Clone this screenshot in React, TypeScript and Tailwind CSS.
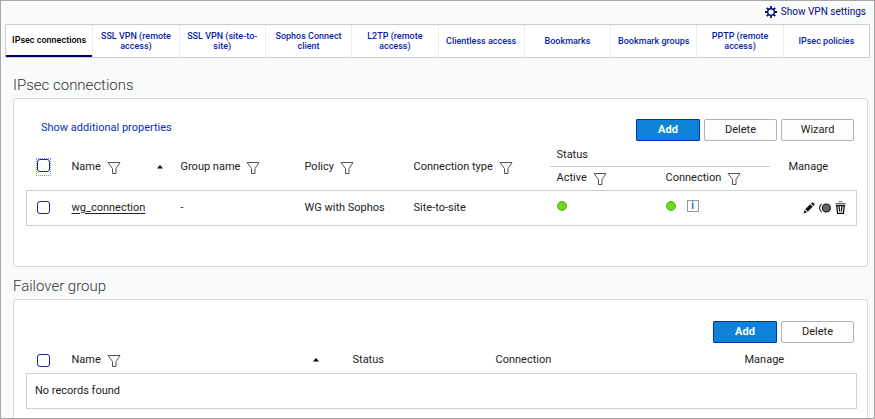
import type { ReactNode } from "react";

const tabs = [
  "IPsec connections",
  "SSL VPN (remote access)",
  "SSL VPN (site-to-site)",
  "Sophos Connect client",
  "L2TP (remote access)",
  "Clientless access",
  "Bookmarks",
  "Bookmark groups",
  "PPTP (remote access)",
  "IPsec policies",
];

function GearIcon() {
  return (
    <svg viewBox="0 0 12 12" className="size-3 shrink-0" stroke="#000d80" fill="none" aria-hidden="true">
      <circle cx="6" cy="6" r="3.3" strokeWidth="1.4" />
      <path
        strokeWidth="1.8"
        d="M6 0v2.4M6 9.6V12M0 6h2.4M9.6 6H12M1.8 1.8l1.6 1.6M8.6 8.6l1.6 1.6M1.8 10.2l1.6-1.6M8.6 3.4l1.6-1.6"
      />
    </svg>
  );
}

function FilterIcon() {
  return (
    <svg viewBox="0 0 14 14" className="size-3.5" fill="none" stroke="#555" aria-hidden="true">
      <path d="M1 1.5h12L9 7.5v5H5.5v-5z" />
    </svg>
  );
}

function FilterButton({ label }: { label: string }) {
  return (
    <button type="button" aria-label={label} className="mt-0.5 shrink-0">
      <FilterIcon />
    </button>
  );
}

function SortIcon() {
  return (
    <svg viewBox="0 0 6 4" className="h-1 w-1.5 shrink-0" fill="#000" aria-hidden="true">
      <path d="M3 0l3 3.5H0z" />
    </svg>
  );
}

function PencilIcon() {
  return (
    <svg viewBox="0 0 12 12" className="size-3" aria-hidden="true">
      <path d="M.5 11.5l1-3.4 2.4 2.4zM2.2 7.3l5-5 2.5 2.5-5 5zM8 1.6L9 .6q.5-.4 1 0L11.4 2q.4.5 0 1l-1 1z" fill="#111" />
    </svg>
  );
}

function ToggleIcon() {
  return (
    <svg viewBox="0 0 12 10" className="h-2.5 w-3" fill="none" aria-hidden="true">
      <path d="M2.6.8Q.6 2.6.6 5t2 4.2" stroke="#222" strokeWidth="1.1" />
      <circle cx="7.4" cy="5" r="4" fill="#666" stroke="#111" strokeWidth="1.1" />
    </svg>
  );
}

function TrashIcon() {
  return (
    <svg viewBox="0 0 11 13" className="h-[13px] w-[11px]" fill="none" stroke="#111" aria-hidden="true">
      <path d="M4 1.5v-1h3v1" stroke="#888" />
      <path d="M.5 2.5h10" stroke="#666" />
      <path d="M.8 4.5h9.400M1.800 5l.8 7.400h5.800L9.200 5" strokeWidth="1.300" />
      <path d="M4 5l.7 5.500M7 5l-.7 5.500" strokeWidth="1.200" />
    </svg>
  );
}

function Check({ label, focused = false }: { label: string; focused?: boolean }) {
  return (
    <div
      className={
        focused
          ? "ml-2.5 flex h-4 w-[13px] items-start outline-1 outline-dotted outline-[#69a0dd]"
          : "ml-2.5 flex w-[13px]"
      }
    >
      <input
        type="checkbox"
        aria-label={label}
        className="size-[13px] appearance-none rounded-[3px] border border-[#2020a8] bg-white checked:bg-[#0f84d6]"
      />
    </div>
  );
}

function Action({ children, primary = false }: { children: string; primary?: boolean }) {
  return (
    <button
      type="button"
      className={
        primary
          ? "h-[22px] w-16 rounded-[1px] border border-[#0a2fb8] bg-[#0f84d6] font-bold text-white"
          : "h-[22px] w-[73px] rounded-[2px] border border-[#b3b3b3] bg-[#fdfdfd]"
      }
    >
      {children}
    </button>
  );
}

function HeadCell({ children, filter = false, sort = false }: { children: string; filter?: boolean; sort?: boolean }) {
  return (
    <div className="flex items-center gap-1.5">
      {children}
      {filter && <FilterButton label={`Filter ${children}`} />}
      {sort && (
        <span className="mr-[18px] ml-auto">
          <SortIcon />
        </span>
      )}
    </div>
  );
}

function Title({ children }: { children: ReactNode }) {
  return <h2 className="ml-3 text-[15px] leading-5 font-light text-[#333]">{children}</h2>;
}

export default function App() {
  return (
    <div className="flex min-h-screen flex-col border border-[#a6a6a6] bg-[#f9fbfb] font-[Roboto,'Liberation_Sans',sans-serif] text-[11px] leading-4 text-[#222]">
      <a href="#settings" className="mt-[3px] mr-2 flex items-center gap-1 self-end text-[10px] text-[#000d80]">
        <GearIcon />
        Show VPN settings
      </a>

      <nav className="mx-1 mt-1 grid h-[34px] grid-cols-10 rounded-[1px] border border-[#ccc] bg-white text-[9px] leading-[10px] font-medium">
        {tabs.map((tab, i) => (
          <a
            key={tab}
            href={`#tab-${i}`}
            aria-current={i === 0 ? "page" : undefined}
            className={
              i === 0
                ? "flex items-center justify-center border-b-2 border-[#00007f] text-center whitespace-nowrap text-black"
                : "flex items-center justify-center border-l border-[#eee] px-1 text-center text-[#0a1fa8]"
            }
          >
            {tab}
          </a>
        ))}
      </nav>

      <main className="flex flex-1 flex-col">
        <section className="mt-[17px]">
          <Title>IPsec connections</Title>
          <div className="mt-[3px] mr-1.5 ml-3 rounded-[3px] border border-[#d5dada] bg-white pt-5 pr-[13px] pb-10 pl-3">
            <div className="flex items-center gap-1">
              <a href="#properties" className="mr-auto -mt-1 ml-[15px] text-[#0a2fb8]">
                Show additional properties
              </a>
              <Action primary>Add</Action>
              <Action>Delete</Action>
              <Action>Wizard</Action>
            </div>
            <table className="mt-1 w-full table-fixed border-collapse text-left">
              <colgroup>
                <col className="w-[45px]" />
                <col className="w-[109px]" />
                <col className="w-[124px]" />
                <col className="w-[109px]" />
                <col className="w-[136px]" />
                <col className="w-[109px]" />
                <col className="w-[111px]" />
                <col className="w-[87px]" />
              </colgroup>
              <thead className="[&_th]:p-0 [&_th]:font-normal">
                <tr className="h-[21px]">
                  <th rowSpan={2}><Check label="Select all connections" focused /></th>
                  <th rowSpan={2}><HeadCell filter sort>Name</HeadCell></th>
                  <th rowSpan={2}><HeadCell filter>Group name</HeadCell></th>
                  <th rowSpan={2}><HeadCell filter>Policy</HeadCell></th>
                  <th rowSpan={2}><HeadCell filter>Connection type</HeadCell></th>
                  <th colSpan={2} className="border-b border-[#c5cfd2]"><div className="ml-[7px]">Status</div></th>
                  <th rowSpan={2}><div className="ml-[19px]">Manage</div></th>
                </tr>
                <tr className="h-6">
                  <th><div className="ml-[7px]"><HeadCell filter>Active</HeadCell></div></th>
                  <th><div className="ml-[7px]"><HeadCell filter>Connection</HeadCell></div></th>
                </tr>
              </thead>
              <tbody>
                <tr className="h-[35px] border border-[#ccd2d4]">
                  <td><Check label="Select wg_connection" /></td>
                  <td><a href="#wg" className="underline underline-offset-2">wg_connection</a></td>
                  <td>-</td>
                  <td>WG with Sophos</td>
                  <td>Site-to-site</td>
                  <td className="pb-1">
                    <span role="img" aria-label="Active" className="ml-[7px] block size-2.5 rounded-full border border-[#3cb815] bg-[#76d61c]" />
                  </td>
                  <td className="pb-1">
                    <div className="ml-[7px] flex items-center gap-[11px]">
                      <span role="img" aria-label="Connected" className="size-2.5 rounded-full border border-[#3cb815] bg-[#76d61c]" />
                      <button type="button" className="size-3 border border-[#999] text-[10px] leading-[10px] font-bold text-[#0f7cc8]">
                        i
                      </button>
                    </div>
                  </td>
                  <td>
                    <div className="mr-2.5 flex items-center justify-end gap-1">
                      <button type="button" aria-label="Edit"><PencilIcon /></button>
                      <button type="button" aria-label="Disconnect"><ToggleIcon /></button>
                      <button type="button" aria-label="Delete connection"><TrashIcon /></button>
                    </div>
                  </td>
                </tr>
              </tbody>
            </table>
          </div>
        </section>

        <section className="mt-[9px] flex flex-1 flex-col">
          <Title>Failover group</Title>
          <div className="mt-[3px] mr-1.5 ml-3 flex-1 rounded-t-[3px] border border-b-0 border-[#d5dada] bg-white pt-[21px] pr-[13px] pb-2 pl-3">
            <div className="flex justify-end gap-1">
              <Action primary>Add</Action>
              <Action>Delete</Action>
            </div>
            <table className="mt-[5px] w-full table-fixed border-collapse text-left">
              <colgroup>
                <col className="w-[45px]" />
                <col className="w-[281px]" />
                <col className="w-[143px]" />
                <col className="w-[249px]" />
                <col className="w-[112px]" />
              </colgroup>
              <thead className="[&_th]:p-0 [&_th]:font-normal">
                <tr className="h-[26px]">
                  <th><Check label="Select all groups" /></th>
                  <th><div className="mr-4"><HeadCell filter sort>Name</HeadCell></div></th>
                  <th>Status</th>
                  <th>Connection</th>
                  <th>Manage</th>
                </tr>
              </thead>
              <tbody>
                <tr className="h-[35px] border border-[#ccd2d4]">
                  <td colSpan={5}><span className="ml-2">No records found</span></td>
                </tr>
              </tbody>
            </table>
          </div>
        </section>
      </main>
    </div>
  );
}
